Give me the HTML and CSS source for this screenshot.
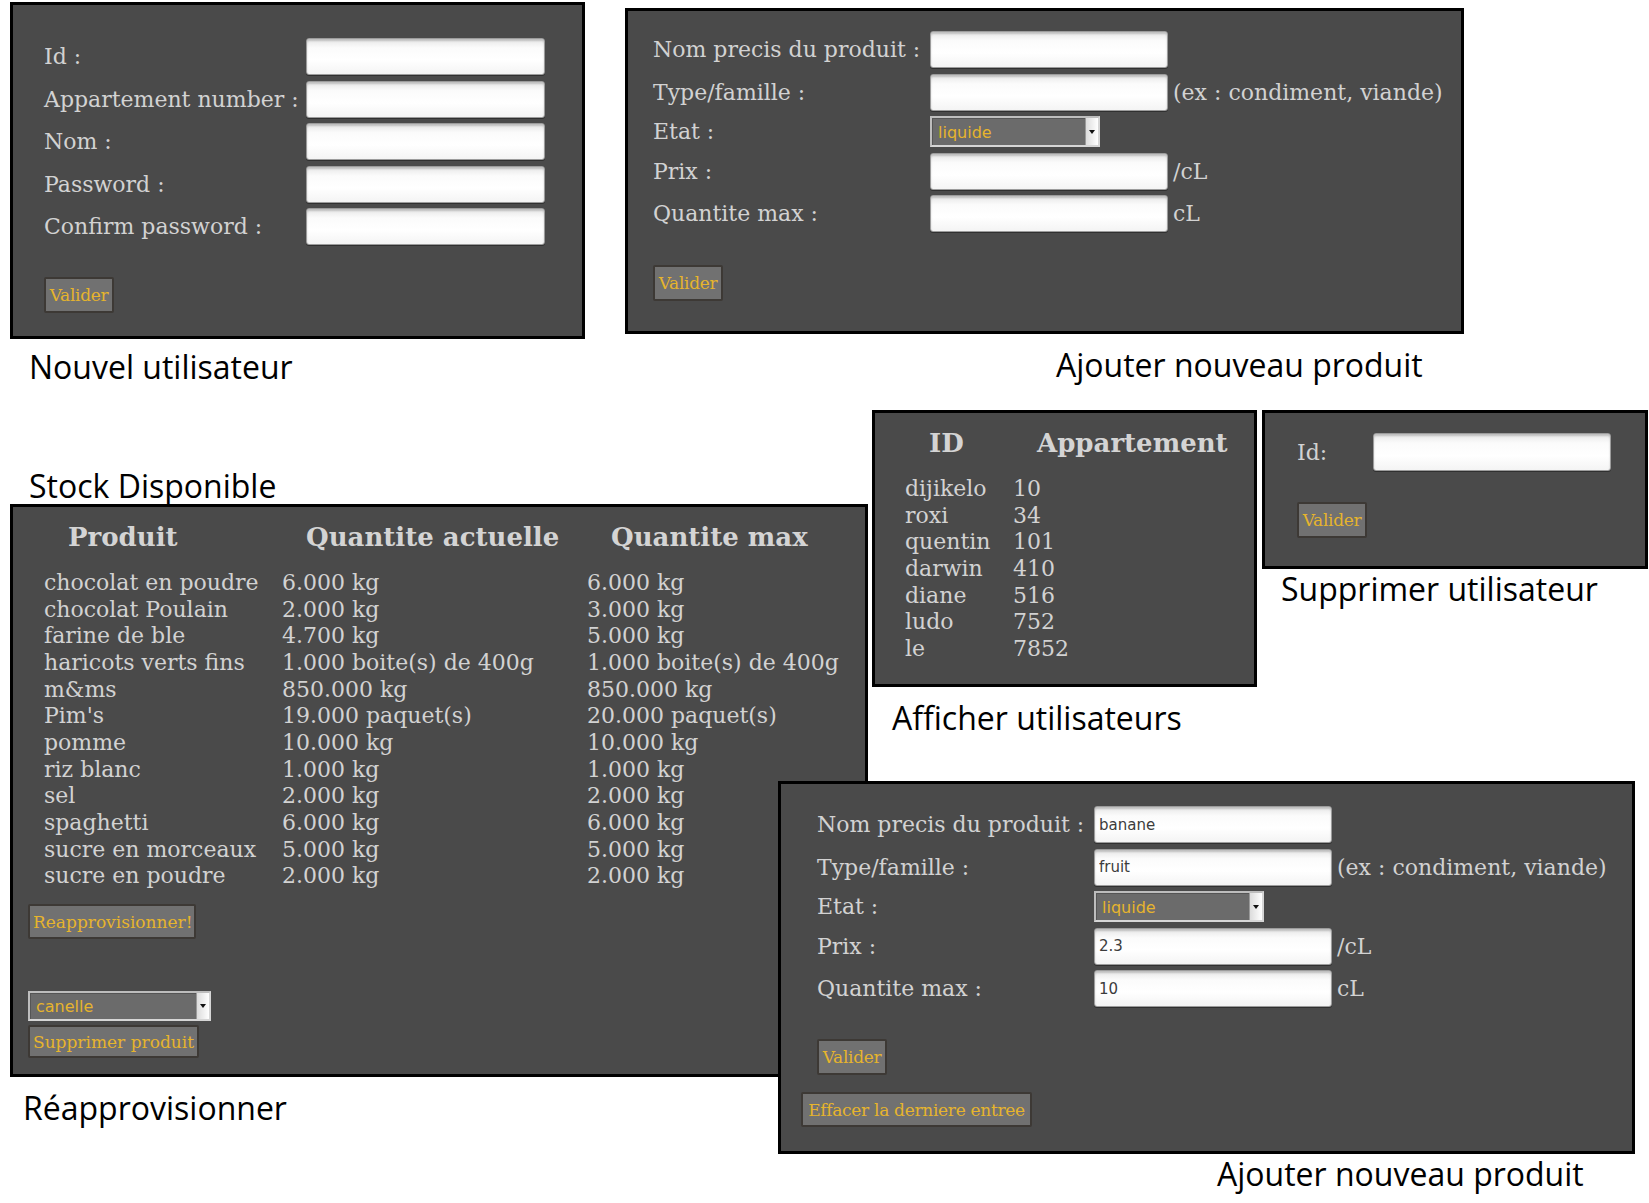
FILE: index.html
```html
<!DOCTYPE html>
<html lang="fr">
<head>
<meta charset="utf-8">
<title>Gestion du stock - maquettes</title>
<link rel="stylesheet" href="styles.css">
</head>
<body>
<main class="canvas">

  <section class="panel p-user">
    <div class="form form-user">
      <span class="lbl">Id :</span><input class="field" type="text">
      <span class="lbl">Appartement number :</span><input class="field" type="text">
      <span class="lbl">Nom :</span><input class="field" type="text">
      <span class="lbl">Password :</span><input class="field" type="password">
      <span class="lbl">Confirm password :</span><input class="field" type="password">
    </div>
    <button class="btn btn-valider" type="button">Valider</button>
  </section>
  <p class="caption c-user">Nouvel utilisateur</p>

  <section class="panel p-prod1">
    <div class="form form-prod">
      <span class="lbl">Nom precis du produit :</span><input class="field" type="text"><span></span>
      <span class="lbl">Type/famille :</span><input class="field" type="text"><span class="suffix">(ex : condiment, viande)</span>
      <span class="lbl">Etat :</span><span class="select sel-etat"><span class="sel-text">liquide</span><span class="sel-arrow"></span></span><span></span>
      <span class="lbl">Prix :</span><input class="field" type="text"><span class="suffix">/cL</span>
      <span class="lbl">Quantite max :</span><input class="field" type="text"><span class="suffix">cL</span>
    </div>
    <button class="btn btn-valider" type="button">Valider</button>
  </section>
  <p class="caption c-prod1">Ajouter nouveau produit</p>

  <p class="caption c-stock">Stock Disponible</p>
  <section class="panel p-stock">
    <div class="stock-grid">
      <span class="th">Produit</span><span class="th">Quantite actuelle</span><span class="th">Quantite max</span>
      <span>chocolat en poudre</span><span>6.000 kg</span><span>6.000 kg</span>
      <span>chocolat Poulain</span><span>2.000 kg</span><span>3.000 kg</span>
      <span>farine de ble</span><span>4.700 kg</span><span>5.000 kg</span>
      <span>haricots verts fins</span><span>1.000 boite(s) de 400g</span><span>1.000 boite(s) de 400g</span>
      <span>m&amp;ms</span><span>850.000 kg</span><span>850.000 kg</span>
      <span>Pim's</span><span>19.000 paquet(s)</span><span>20.000 paquet(s)</span>
      <span>pomme</span><span>10.000 kg</span><span>10.000 kg</span>
      <span>riz blanc</span><span>1.000 kg</span><span>1.000 kg</span>
      <span>sel</span><span>2.000 kg</span><span>2.000 kg</span>
      <span>spaghetti</span><span>6.000 kg</span><span>6.000 kg</span>
      <span>sucre en morceaux</span><span>5.000 kg</span><span>5.000 kg</span>
      <span>sucre en poudre</span><span>2.000 kg</span><span>2.000 kg</span>
    </div>
    <div class="stock-actions">
      <button class="btn btn-reappro" type="button">Reapprovisionner!</button>
      <div class="delete-block">
        <span class="select sel-canelle"><span class="sel-text">canelle</span><span class="sel-arrow"></span></span>
        <button class="btn btn-suppr" type="button">Supprimer produit</button>
      </div>
    </div>
  </section>
  <p class="caption c-reappro">Réapprovisionner</p>

  <section class="panel p-users">
    <div class="users-grid">
      <span class="th">ID</span><span class="th">Appartement</span>
      <span>dijikelo</span><span>10</span>
      <span>roxi</span><span>34</span>
      <span>quentin</span><span>101</span>
      <span>darwin</span><span>410</span>
      <span>diane</span><span>516</span>
      <span>ludo</span><span>752</span>
      <span>le</span><span>7852</span>
    </div>
  </section>
  <p class="caption c-users">Afficher utilisateurs</p>

  <section class="panel p-del">
    <div class="del-row">
      <span class="lbl">Id:</span><input class="field" type="text">
    </div>
    <button class="btn btn-valider" type="button">Valider</button>
  </section>
  <p class="caption c-del">Supprimer utilisateur</p>

  <section class="panel p-prod2">
    <div class="form form-prod">
      <span class="lbl">Nom precis du produit :</span><input class="field" type="text" value="banane"><span></span>
      <span class="lbl">Type/famille :</span><input class="field" type="text" value="fruit"><span class="suffix">(ex : condiment, viande)</span>
      <span class="lbl">Etat :</span><span class="select sel-etat"><span class="sel-text">liquide</span><span class="sel-arrow"></span></span><span></span>
      <span class="lbl">Prix :</span><input class="field" type="text" value="2.3"><span class="suffix">/cL</span>
      <span class="lbl">Quantite max :</span><input class="field" type="text" value="10"><span class="suffix">cL</span>
    </div>
    <button class="btn btn-valider" type="button">Valider</button>
    <button class="btn btn-effacer" type="button">Effacer la derniere entree</button>
  </section>
  <p class="caption c-prod2">Ajouter nouveau produit</p>

</main>
</body>
</html>
```

FILE: styles.css
```css
html, body {
  margin: 0;
  padding: 0;
  background: #ffffff;
}

.canvas {
  position: relative;
  width: 1649px;
  height: 1203px;
  overflow: hidden;
  font-family: "DejaVu Serif", "Liberation Serif", serif;
}

/* ---------- panels (windows on a free canvas) ---------- */
.panel {
  position: absolute;
  box-sizing: border-box;
  background: #4a4a4a;
  border: 3px solid #000;
  color: #d2d2d2;
}

.p-user  { left: 10px;  top: 2px;   width: 575px; height: 337px; padding: 33px 0 0 31px; }
.p-prod1 { left: 625px; top: 8px;   width: 839px; height: 326px; padding: 20px 0 0 25px; }
.p-stock { left: 10px;  top: 504px; width: 858px; height: 573px; padding: 15px 0 0 15px; }
.p-users { left: 872px; top: 410px; width: 385px; height: 277px; padding: 15px 0 0 30px; }
.p-del   { left: 1262px; top: 410px; width: 386px; height: 159px; padding: 20px 0 0 32px; }
.p-prod2 { left: 778px; top: 781px; width: 857px; height: 373px; padding: 22px 0 0 36px; z-index: 2; }

/* ---------- captions ---------- */
.caption {
  position: absolute;
  margin: 0;
  font-family: "Open Sans", "Noto Sans", sans-serif;
  font-size: 32px;
  line-height: 40px;
  color: #000;
  white-space: nowrap;
}
.c-user    { left: 29px;   top: 347px; }
.c-prod1   { left: 1056px; top: 345px; }
.c-stock   { left: 29px;   top: 466px; }
.c-reappro { left: 23px;   top: 1088px; }
.c-users   { left: 892px;  top: 698px; }
.c-del     { left: 1281px; top: 569px; }
.c-prod2   { left: 1217px; top: 1154px; }

/* ---------- form rows ---------- */
.form {
  display: grid;
  align-items: center;
  row-gap: 5.5px;
}
.form-user {
  grid-template-columns: 262px 239px;
  grid-auto-rows: 37px;
  font-size: 22px;
}
.form-prod {
  grid-template-columns: 277px 238px auto;
  grid-template-rows: 37px 37px 31px 37px 37px;
  font-size: 22px;
}
.lbl {
  white-space: nowrap;
  color: #d2d2d2;
}
.suffix {
  padding-left: 5px;
  white-space: nowrap;
  color: #d2d2d2;
}

.field {
  box-sizing: border-box;
  width: 100%;
  height: 37px;
  margin: 0;
  padding: 0 4px;
  border: 1px solid #9c9c9c;
  border-radius: 3px;
  background: linear-gradient(#e6e6e6 0, #fbfbfb 25%, #ffffff 60%, #f4f4f4 100%);
  box-shadow: inset 0 2px 2px rgba(0, 0, 0, 0.18), 0 1px 0 rgba(0, 0, 0, 0.35);
  font-family: "DejaVu Sans", sans-serif;
  font-size: 15px;
  letter-spacing: 0;
  color: #3c3c3c;
  outline: none;
}

/* fake select boxes */
.select {
  box-sizing: border-box;
  display: flex;
  align-items: stretch;
  height: 31px;
  border: 2px solid #d6d6d6;
  border-top-color: #bdbdbd;
  border-left-color: #bdbdbd;
  background: #6b6b6b;
}
.sel-etat { width: 170px; }
.sel-canelle { width: 183px; height: 30px; }
.sel-text {
  flex: 1;
  display: flex;
  align-items: center;
  padding-left: 5px;
  border-top: 1px solid #555;
  border-left: 1px solid #555;
  font-family: "DejaVu Sans", sans-serif;
  font-size: 16px;
  letter-spacing: 0;
  color: #e6b42d;
}
.sel-arrow {
  position: relative;
  width: 12px;
  background: linear-gradient(90deg, #dcdcdc, #ffffff);
  border-left: 1px solid #9a9a9a;
}
.sel-arrow::after {
  content: "";
  position: absolute;
  left: 3px;
  top: 50%;
  margin-top: -2px;
  border-left: 3px solid transparent;
  border-right: 3px solid transparent;
  border-top: 4px solid #111;
}

/* ---------- buttons ---------- */
.btn {
  display: block;
  box-sizing: border-box;
  margin: 0;
  padding: 0 3px;
  border: 2px solid #3d3935;
  border-radius: 2px;
  background: #717171;
  color: #e6b42d;
  font-family: "DejaVu Serif", serif;
  font-size: 17px;
  white-space: nowrap;
  cursor: pointer;
}
.btn-valider { width: 70px; height: 36px; margin-top: 32px; letter-spacing: -0.3px; }
.p-prod1 .btn-valider { margin-top: 33px; }
.btn-effacer { width: 231px; height: 35px; margin: 17px 0 0 -16px; letter-spacing: -0.3px; }
.p-del .btn-valider { margin-top: 31px; }

.btn-reappro { width: 168px; height: 35px; }
.btn-suppr  { width: 171px; height: 33px; margin-top: 4px; }

.stock-actions {
  margin-top: 14px;
}
.delete-block {
  margin-top: 52px;
}

/* ---------- stock table ---------- */
.stock-grid {
  display: grid;
  grid-template-columns: 238px 305px auto;
  padding-left: 16px;
  font-size: 22px;
  line-height: 26.67px;
  white-space: nowrap;
}
.th {
  font-weight: bold;
  font-size: 26px;
  line-height: 30px;
  padding-left: 24px;
  margin-bottom: 18px;
  color: #d4d4d4;
}

/* ---------- users table ---------- */
.users-grid {
  display: grid;
  grid-template-columns: 108px auto;
  font-size: 22px;
  line-height: 26.64px;
  white-space: nowrap;
}
.users-grid .th { margin-bottom: 18px; }

/* ---------- delete user ---------- */
.del-row {
  display: grid;
  grid-template-columns: 76px 238px;
  align-items: center;
  font-size: 22px;
}
.del-row .field { height: 38px; }
```
